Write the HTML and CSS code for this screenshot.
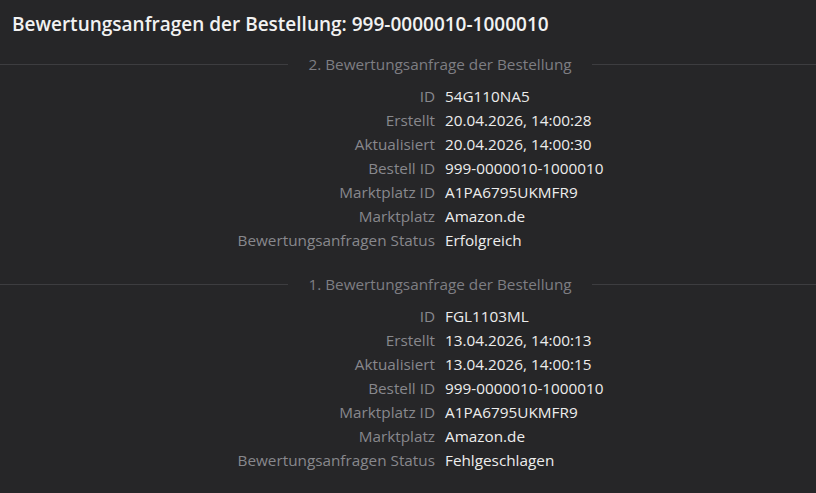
FILE: index.html
```html
<!DOCTYPE html>
<html lang="de">
<head>
<meta charset="utf-8">
<link rel="stylesheet" href="styles.css">
</head>
<body>
<h1 class="title">Bewertungsanfragen der Bestellung: 999-0000010-1000010</h1>

<section class="request">
  <div class="divider"><span class="line line-left"></span><span class="divider-text">2. Bewertungsanfrage der Bestellung</span><span class="line line-right"></span></div>
  <dl class="fields">
    <dt>ID</dt><dd>54G110NA5</dd>
    <dt>Erstellt</dt><dd>20.04.2026, 14:00:28</dd>
    <dt>Aktualisiert</dt><dd>20.04.2026, 14:00:30</dd>
    <dt>Bestell ID</dt><dd>999-0000010-1000010</dd>
    <dt>Marktplatz ID</dt><dd>A1PA6795UKMFR9</dd>
    <dt>Marktplatz</dt><dd>Amazon.de</dd>
    <dt>Bewertungsanfragen Status</dt><dd>Erfolgreich</dd>
  </dl>
</section>

<section class="request">
  <div class="divider"><span class="line line-left"></span><span class="divider-text">1. Bewertungsanfrage der Bestellung</span><span class="line line-right"></span></div>
  <dl class="fields">
    <dt>ID</dt><dd>FGL1103ML</dd>
    <dt>Erstellt</dt><dd>13.04.2026, 14:00:13</dd>
    <dt>Aktualisiert</dt><dd>13.04.2026, 14:00:15</dd>
    <dt>Bestell ID</dt><dd>999-0000010-1000010</dd>
    <dt>Marktplatz ID</dt><dd>A1PA6795UKMFR9</dd>
    <dt>Marktplatz</dt><dd>Amazon.de</dd>
    <dt>Bewertungsanfragen Status</dt><dd>Fehlgeschlagen</dd>
  </dl>
</section>
</body>
</html>
```
FILE: styles.css
```css
html, body {
  margin: 0;
  padding: 0;
  background: #262628;
}
body {
  font-family: "Open Sans", "Noto Sans", sans-serif;
  color: #ececec;
  width: 816px;
  height: 493px;
  overflow: hidden;
}
.title {
  margin: 0;
  padding: 11px 12px 0 12px;
  font-size: 19px;
  line-height: 26px;
  font-weight: 600;
  color: #f2f2f2;
}
.request {
  margin-top: 15px;
}
.request + .request {
  margin-top: 20px;
}
.divider {
  display: flex;
  align-items: center;
  gap: 20px;
}
.line {
  height: 1px;
  background: #3d3d40;
}
.line-left {
  flex: 1 1 64px;
}
.line-right {
  flex: 1 1 0;
}
.divider-text {
  flex: none;
  font-size: 15.3px;
  line-height: 24px;
  color: #7e7e83;
}
.fields {
  display: grid;
  grid-template-columns: 435px 1fr;
  column-gap: 10px;
  margin: 8px 0 0 0;
}
.fields dt {
  text-align: right;
  color: #88888d;
  font-size: 15.3px;
  line-height: 24px;
}
.fields dd {
  margin: 0;
  color: #ededed;
  font-size: 15.3px;
  line-height: 24px;
}
```
